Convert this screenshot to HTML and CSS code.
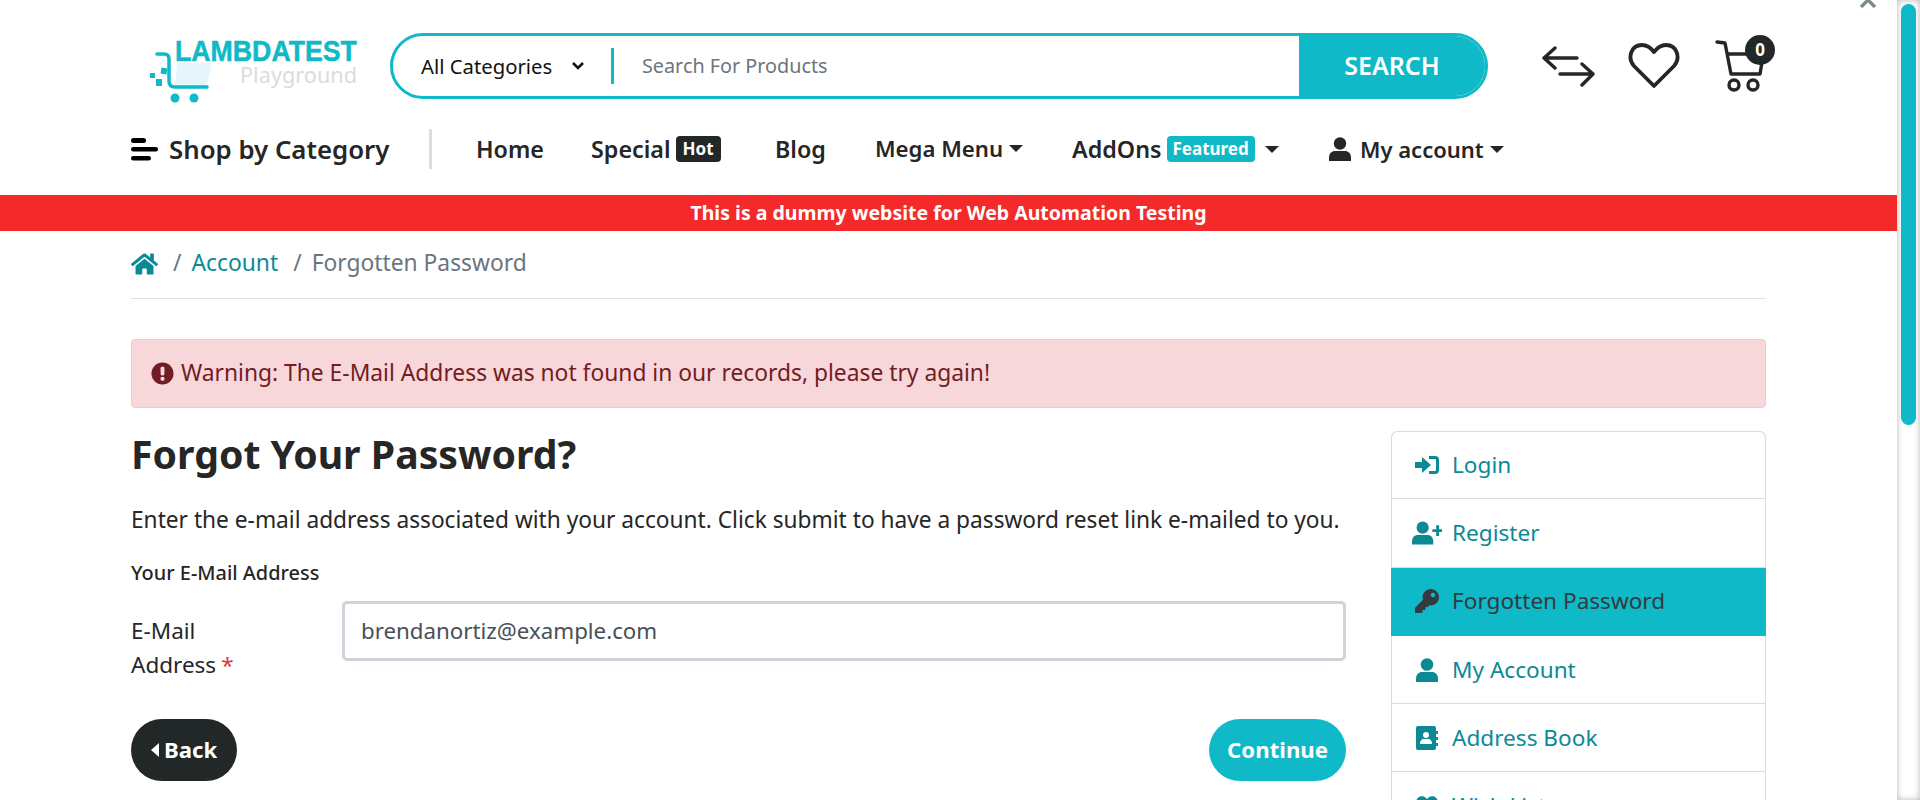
FILE: index.html
```html
<!DOCTYPE html>
<html lang="en">

<head>
    <meta charset="UTF-8">
    <meta name="viewport" content="width=device-width, initial-scale=1.0">
    <title>Forgot Your Password?</title>
    <link rel="stylesheet" href="styles.css">
</head>

<body>
    <div class="page">
        <header class="container top-row">
            <a class="logo" href="#">
                <svg class="logo-cart" width="66" height="56" viewBox="0 0 66 56">
                    <path d="M29 15h32q2 0 2 2l-4 21H27z" fill="#e6f4fb"/>
                    <path d="M9 6h7q5 0 5 5v22q0 6 6 6h32" fill="none" stroke="#0fb9c8" stroke-width="3.5" stroke-linecap="round"/>
                    <rect x="13" y="20" width="6" height="6" fill="#0fb9c8" transform="rotate(10 16 23)"/>
                    <rect x="2" y="25" width="5" height="5" fill="#0fb9c8"/>
                    <rect x="8" y="31" width="6" height="7" fill="#0fb9c8"/>
                    <circle cx="27" cy="50" r="4.5" fill="#0fb9c8"/>
                    <circle cx="46" cy="50" r="4.5" fill="#0fb9c8"/>
                </svg>
                <span class="logo-title">LAMBDATEST</span>
                <span class="logo-sub">Playground</span>
            </a>
            <form class="search">
                <div class="search-cat">All Categories
                    <svg width="14" height="10" viewBox="0 0 14 10"><path d="M2 2l5 5 5-5" fill="none" stroke="#111" stroke-width="2.6"/></svg>
                </div>
                <input class="search-input" type="text" placeholder="Search For Products">
                <button class="search-btn" type="button">SEARCH</button>
            </form>
            <div class="top-icons">
                <svg width="54" height="42" viewBox="0 0 54 42"><path d="M13 3L2 13l11 10M2 13h33M40 19l11 10-11 11M51 29H18" fill="none" stroke="#262626" stroke-width="3.4" stroke-linecap="round" stroke-linejoin="round"/></svg>
                <svg width="54" height="48" viewBox="0 0 54 48"><path d="M27 44L7 24C0 16 4 3 15 3c5 0 9 3 12 7 3-4 7-7 12-7 11 0 15 13 8 21z" fill="none" stroke="#262626" stroke-width="3.8" stroke-linejoin="round"/></svg>
                <div class="cart">
                    <svg width="50" height="54" viewBox="0 0 50 54"><path d="M2 3l8 1 6 31h29l2-12M13 15h29" fill="none" stroke="#262626" stroke-width="3.4" stroke-linecap="round" stroke-linejoin="round"/><circle cx="19" cy="46" r="5" fill="none" stroke="#262626" stroke-width="3.4"/><circle cx="38" cy="46" r="5" fill="none" stroke="#262626" stroke-width="3.4"/></svg>
                    <span class="cart-count">0</span>
                </div>
            </div>
        </header>

        <nav class="container main-nav">
            <a class="shop-by" href="#">
                <svg width="27" height="24" viewBox="0 0 27 24"><rect x="0" y="1" width="15" height="5" rx="2.5"/><rect x="0" y="10" width="27" height="4.5" rx="2.2"/><rect x="0" y="19" width="20" height="4.5" rx="2.2"/></svg>
                Shop by Category
            </a>
            <ul class="nav-list">
                <li class="nav-home"><a href="#">Home</a></li>
                <li class="nav-special"><a href="#">Special <span class="tag tag-dark">Hot</span></a></li>
                <li class="nav-blog"><a href="#">Blog</a></li>
                <li class="nav-mega"><a href="#">Mega Menu<i class="caret"></i></a></li>
                <li class="nav-addons"><a href="#">AddOns <span class="tag tag-teal">Featured</span><i class="caret caret-far"></i></a></li>
                <li class="nav-account"><a href="#">
                    <svg width="22" height="24" viewBox="0 0 22 24" fill="#262626"><circle cx="11" cy="6.5" r="6.2"/><path d="M0 24v-3c0-5 3-7 6-7h10c3 0 6 2 6 7v3z"/></svg>
                    My account<i class="caret"></i></a></li>
            </ul>
        </nav>

        <div class="notice">This is a dummy website for Web Automation Testing</div>

        <div class="container">
            <ol class="crumbs">
                <li><a href="#"><svg width="27" height="24" viewBox="0 0 576 512" fill="#0b8a96"><path d="M280 148L96 300v164c0 9 7 16 16 16l112-.3c9 0 16-7 16-16V368c0-9 7-16 16-16h64c9 0 16 7 16 16v96c0 9 7 16 16 16l112 .3c9 0 16-7 16-16V300L296 148c-4-4-12-4-16 0zM572 251l-84-69V44c0-7-5-12-12-12h-56c-7 0-12 5-12 12v72l-89-74c-18-14-44-14-62 0L4 251c-5 4-6 12-2 17l26 31c4 5 12 6 17 2L280 107c4-4 12-4 16 0l235 194c5 4 13 3 17-2l26-31c4-5 3-13-3-17z"/></svg></a></li>
                <li><a href="#">Account</a></li>
                <li class="crumb-now">Forgotten Password</li>
            </ol>

            <div class="alert">
                <svg width="23" height="23" viewBox="0 0 24 24"><circle cx="12" cy="12" r="11.5" fill="#721c24"/><rect x="10" y="5" width="4" height="9" rx="1.5" fill="#f8d7da"/><circle cx="12" cy="17.5" r="2.2" fill="#f8d7da"/></svg>
                Warning: The E-Mail Address was not found in our records, please try again!
            </div>

            <div class="layout">
                <main class="content">
                    <h1>Forgot Your Password?</h1>
                    <p class="intro">Enter the e-mail address associated with your account. Click submit to have a password reset link e-mailed to you.</p>
                    <form>
                        <div class="legend">Your E-Mail Address</div>
                        <div class="field">
                            <label for="email">E-Mail Address<span class="req">*</span></label>
                            <input id="email" type="text" value="brendanortiz@example.com">
                        </div>
                        <div class="actions">
                            <a class="btn btn-back" href="#"><i class="caret-left"></i>Back</a>
                            <button class="btn btn-go" type="button">Continue</button>
                        </div>
                    </form>
                </main>

                <aside class="side-list">
                    <a href="#"><span class="side-ico"><svg width="24" height="20" viewBox="0 0 24 20"><path d="M0 7h7V2l9 8-9 8v-5H0zM14 1h6q4 0 4 4v10q0 4-4 4h-6v-3h6q1 0 1-1V5q0-1-1-1h-6z"/></svg></span>Login</a>
                    <a href="#"><span class="side-ico"><svg width="31" height="24" viewBox="0 0 31 24"><circle cx="11" cy="6.5" r="6.3"/><path d="M0 24v-3c0-5 3-7 6-7h10c3 0 6 2 6 7v3z"/><path d="M25 4h3v4h3v3h-3v4h-3v-4h-4V8h4z"/></svg></span>Register</a>
                    <a class="active" href="#"><span class="side-ico"><svg width="24" height="24" viewBox="0 0 512 512"><path d="M512 176c0 97-79 176-176 176-11 0-22-1-33-3l-24 27c-5 5-11 8-18 8h-37v40c0 13-11 24-24 24h-40v40c0 13-11 24-24 24H24c-13 0-24-11-24-24v-78c0-6 3-12 7-17l162-162c-6-18-9-37-9-55C160 79 239 0 336 0s176 79 176 176zm-176-48c0 27 21 48 48 48s48-21 48-48-21-48-48-48-48 21-48 48z"/></svg></span>Forgotten Password</a>
                    <a href="#"><span class="side-ico"><svg width="22" height="24" viewBox="0 0 22 24"><circle cx="11" cy="6.5" r="6.3"/><path d="M0 24v-3c0-5 3-7 6-7h10c3 0 6 2 6 7v3z"/></svg></span>My Account</a>
                    <a href="#"><span class="side-ico"><svg width="22" height="24" viewBox="0 0 22 24"><path fill-rule="evenodd" d="M2 0h16q2 0 2 2v3h2v3h-2v3h2v3h-2v3h2v3h-2v2q0 2-2 2H2q-2 0-2-2V2q0-2 2-2zm8 6a3 3 0 100 6 3 3 0 000-6zM4 18h12v-1c0-2-2-4-3-4H7c-1 0-3 2-3 4z"/></svg></span>Address Book</a>
                    <a href="#"><span class="side-ico"><svg width="24" height="22" viewBox="0 0 512 512"><path d="M462 62c-55-47-136-38-186 13l-20 20-20-20C186 24 105 15 50 62c-63 54-66 150-10 208l193 200c13 13 33 13 46 0l193-200c56-58 53-154-10-208z"/></svg></span>Wish List</a>
                </aside>
            </div>
        </div>
    </div>

    <svg class="close-top" width="18" height="10" viewBox="0 0 18 10"><path d="M2 9l7-7 7 7" fill="none" stroke="#7c8a90" stroke-width="3.4"/></svg>
    <div class="scrollbar"><div class="scrollbar-thumb"></div></div>
</body>

</html>
```
FILE: styles.css
```css
* {
    box-sizing: border-box;
}

html,
body {
    height: 100%;
}

body {
    margin: 0;
    overflow: hidden;
    background: white;
    color: #262626;
    font-family: "Noto Sans", Arial, sans-serif;
    font-size: 20px;
    line-height: 1.5;
}

a {
    color: inherit;
    text-decoration: none;
}

.page {
    width: 1897px;
}

.container {
    width: 1635px;
    margin: 0 auto;
}

/* top row */
.top-row {
    display: flex;
    align-items: center;
    height: 116px;
    padding-top: 16px;
}

.logo {
    position: relative;
    display: block;
    flex: none;
    width: 259px;
    height: 80px;
}

.logo-cart {
    position: absolute;
    left: 17px;
    top: 22px;
}

.logo-title {
    position: absolute;
    left: 44px;
    top: 12px;
    color: #0fb9c8;
    font-family: "Liberation Sans", Arial, sans-serif;
    font-size: 30px;
    font-weight: 700;
    line-height: 26px;
    -webkit-text-stroke: 0.5px #0fb9c8;
    transform: scaleX(0.89);
    transform-origin: left;
}

.logo-sub {
    position: absolute;
    left: 109px;
    top: 38px;
    color: #dcdcdc;
    font-size: 21.7px;
    line-height: 22px;
}

.search {
    display: flex;
    flex: none;
    width: 1098px;
    height: 66px;
    border: 3px solid #0fb9c8;
    border-radius: 33px;
    overflow: hidden;
}

.search-cat {
    display: flex;
    align-items: center;
    justify-content: space-between;
    width: 221px;
    margin: 12px 0;
    padding: 0 26px 0 28px;
    border-right: 3px solid #0fb9c8;
    color: #111;
    font-size: 20.3px;
    white-space: nowrap;
}

.search-input {
    flex: 1;
    border: none;
    padding: 0 28px;
    outline: none;
    font: inherit;
    font-size: 19.8px;
}

.search-input::placeholder {
    color: #6c757d;
}

.search-btn {
    width: 186px;
    border: none;
    background-color: #0fb9c8;
    color: white;
    font: inherit;
    font-weight: 600;
    font-size: 25px;
}

.top-icons {
    display: flex;
    align-items: center;
    gap: 31px;
    margin-left: 54px;
}

.cart {
    position: relative;
    display: flex;
    margin-left: 3px;
}

.cart-count {
    position: absolute;
    top: -4px;
    right: -10px;
    width: 30px;
    height: 30px;
    border-radius: 50%;
    background: #222728;
    color: white;
    font-size: 17px;
    font-weight: 700;
    line-height: 30px;
    text-align: center;
}

/* nav */
.main-nav {
    display: flex;
    align-items: center;
    height: 79px;
    padding-bottom: 13px;
    font-weight: 600;
    font-size: 23.3px;
}

.shop-by {
    display: flex;
    flex: none;
    align-items: center;
    gap: 11px;
    width: 301px;
    height: 40px;
    border-right: 3px solid #dcdcdc;
    font-size: 25.8px;
}

.nav-list {
    display: flex;
    align-items: center;
    margin: 0;
    padding: 0;
    list-style: none;
}

.nav-list a {
    display: flex;
    align-items: center;
    gap: 5px;
    white-space: nowrap;
}

.nav-home { margin-left: 44px; width: 115px; }
.nav-special { width: 184px; }
.nav-blog { width: 100px; }
.nav-mega { width: 197px; font-size: 22.2px; }
.nav-addons { width: 256px; }
.nav-account { margin-left: 1px; font-size: 22px; }

.tag {
    padding: 0 7px;
    border-radius: 4px;
    color: white;
    font-size: 17px;
    font-weight: 700;
    line-height: 26px;
}

.tag-dark {
    background: #222728;
}

.tag-teal {
    padding: 0 6px;
    background: #0fb9c8;
}

.caret {
    display: inline-block;
    margin-left: 1px;
    border-top: 7px solid #262626;
    border-left: 7px solid transparent;
    border-right: 7px solid transparent;
}

.caret-far {
    margin-left: 5px;
}

.nav-account svg {
    margin-right: 4px;
}

.notice {
    height: 36px;
    background-color: #f42929;
    color: white;
    font-size: 19.5px;
    font-weight: 700;
    line-height: 36px;
    text-align: center;
}

/* breadcrumb */
.crumbs {
    display: flex;
    align-items: center;
    height: 68px;
    margin: 0 0 40px;
    padding: 0 0 2px;
    border-bottom: 1px solid #dee2e6;
    list-style: none;
    color: #6c757d;
    font-size: 22.8px;
}

.crumbs li {
    display: flex;
    align-items: center;
    white-space: nowrap;
}

.crumbs a {
    display: flex;
    color: #0b8a96;
}

.crumbs li + li::before {
    content: "/";
    padding: 0 10px 0 15px;
    color: #6c757d;
}

.alert {
    display: flex;
    align-items: center;
    gap: 7px;
    height: 69px;
    margin-bottom: 23px;
    padding: 0 19px;
    border: 1px solid #f5c6cb;
    border-radius: 4px;
    background-color: #f8d7da;
    color: #721c24;
    font-size: 22.8px;
}

.layout {
    display: flex;
    justify-content: space-between;
    align-items: flex-start;
}

.content {
    width: 1215px;
}

h1 {
    margin: 0 0 25.5px;
    font-size: 39.2px;
    font-weight: 700;
    line-height: 46px;
}

.intro {
    margin: 0 0 22px;
    font-size: 22.7px;
    line-height: 34px;
}

.legend {
    margin-bottom: 14px;
    font-size: 19.9px;
    font-weight: 500;
    line-height: 28px;
}

.field {
    display: flex;
    margin-bottom: 37.5px;
}

.field label {
    width: 211px;
    padding-top: 13px;
    padding-right: 60px;
    font-size: 22.5px;
    line-height: 34px;
}

.req {
    margin-left: 5px;
    color: #dc3545;
}

.field input {
    flex: 1;
    height: 60px;
    padding: 0 16px;
    border: 3px solid #ced4da;
    border-radius: 5px;
    outline: none;
    color: #495057;
    font: inherit;
    font-size: 22.3px;
}

.actions {
    display: flex;
    justify-content: space-between;
}

.btn {
    display: flex;
    align-items: center;
    height: 62px;
    border: none;
    border-radius: 31px;
    color: white;
    font: inherit;
    font-size: 22.2px;
    font-weight: 700;
}

.btn-back {
    padding: 0 20px;
    background: #222728;
}

.btn-go {
    padding: 0 18px;
    background: #0fb9c8;
}

.caret-left {
    margin-right: 5px;
    border-right: 8px solid white;
    border-top: 7px solid transparent;
    border-bottom: 7px solid transparent;
}

/* side menu */
.side-list {
    display: flex;
    flex: none;
    flex-direction: column;
    width: 375px;
    border: 1px solid #dcdcdc;
    border-bottom: none;
    border-radius: 6px 6px 0 0;
    font-size: 22.6px;
}

.side-list a {
    display: flex;
    align-items: center;
    height: 68.3px;
    margin: 0 -1px;
    padding: 0 20px;
    border: solid #dcdcdc;
    border-width: 0 1px 1px;
    color: #0b8a96;
}

.side-list a:first-child {
    height: 67.3px;
    border-radius: 6px 6px 0 0;
}

.side-list a.active {
    border-color: #0fb9c8;
    background-color: #0fb9c8;
    color: #343a40;
}

.side-ico {
    display: flex;
    justify-content: center;
    width: 30px;
    margin-right: 10px;
    fill: #0b8a96;
}

.active .side-ico {
    fill: #343a40;
}

/* things lying over the page */
.close-top {
    position: fixed;
    top: -2px;
    left: 1859px;
}

.scrollbar {
    position: fixed;
    top: 0;
    right: 0;
    bottom: 0;
    width: 23px;
    background: white;
    box-shadow: inset 0 0 6px rgba(0, 0, 0, 0.3);
}

.scrollbar-thumb {
    width: 15px;
    height: 421px;
    margin: 4px 0 0 4px;
    border-radius: 8px;
    background-color: #0fb9c8;
}
```
